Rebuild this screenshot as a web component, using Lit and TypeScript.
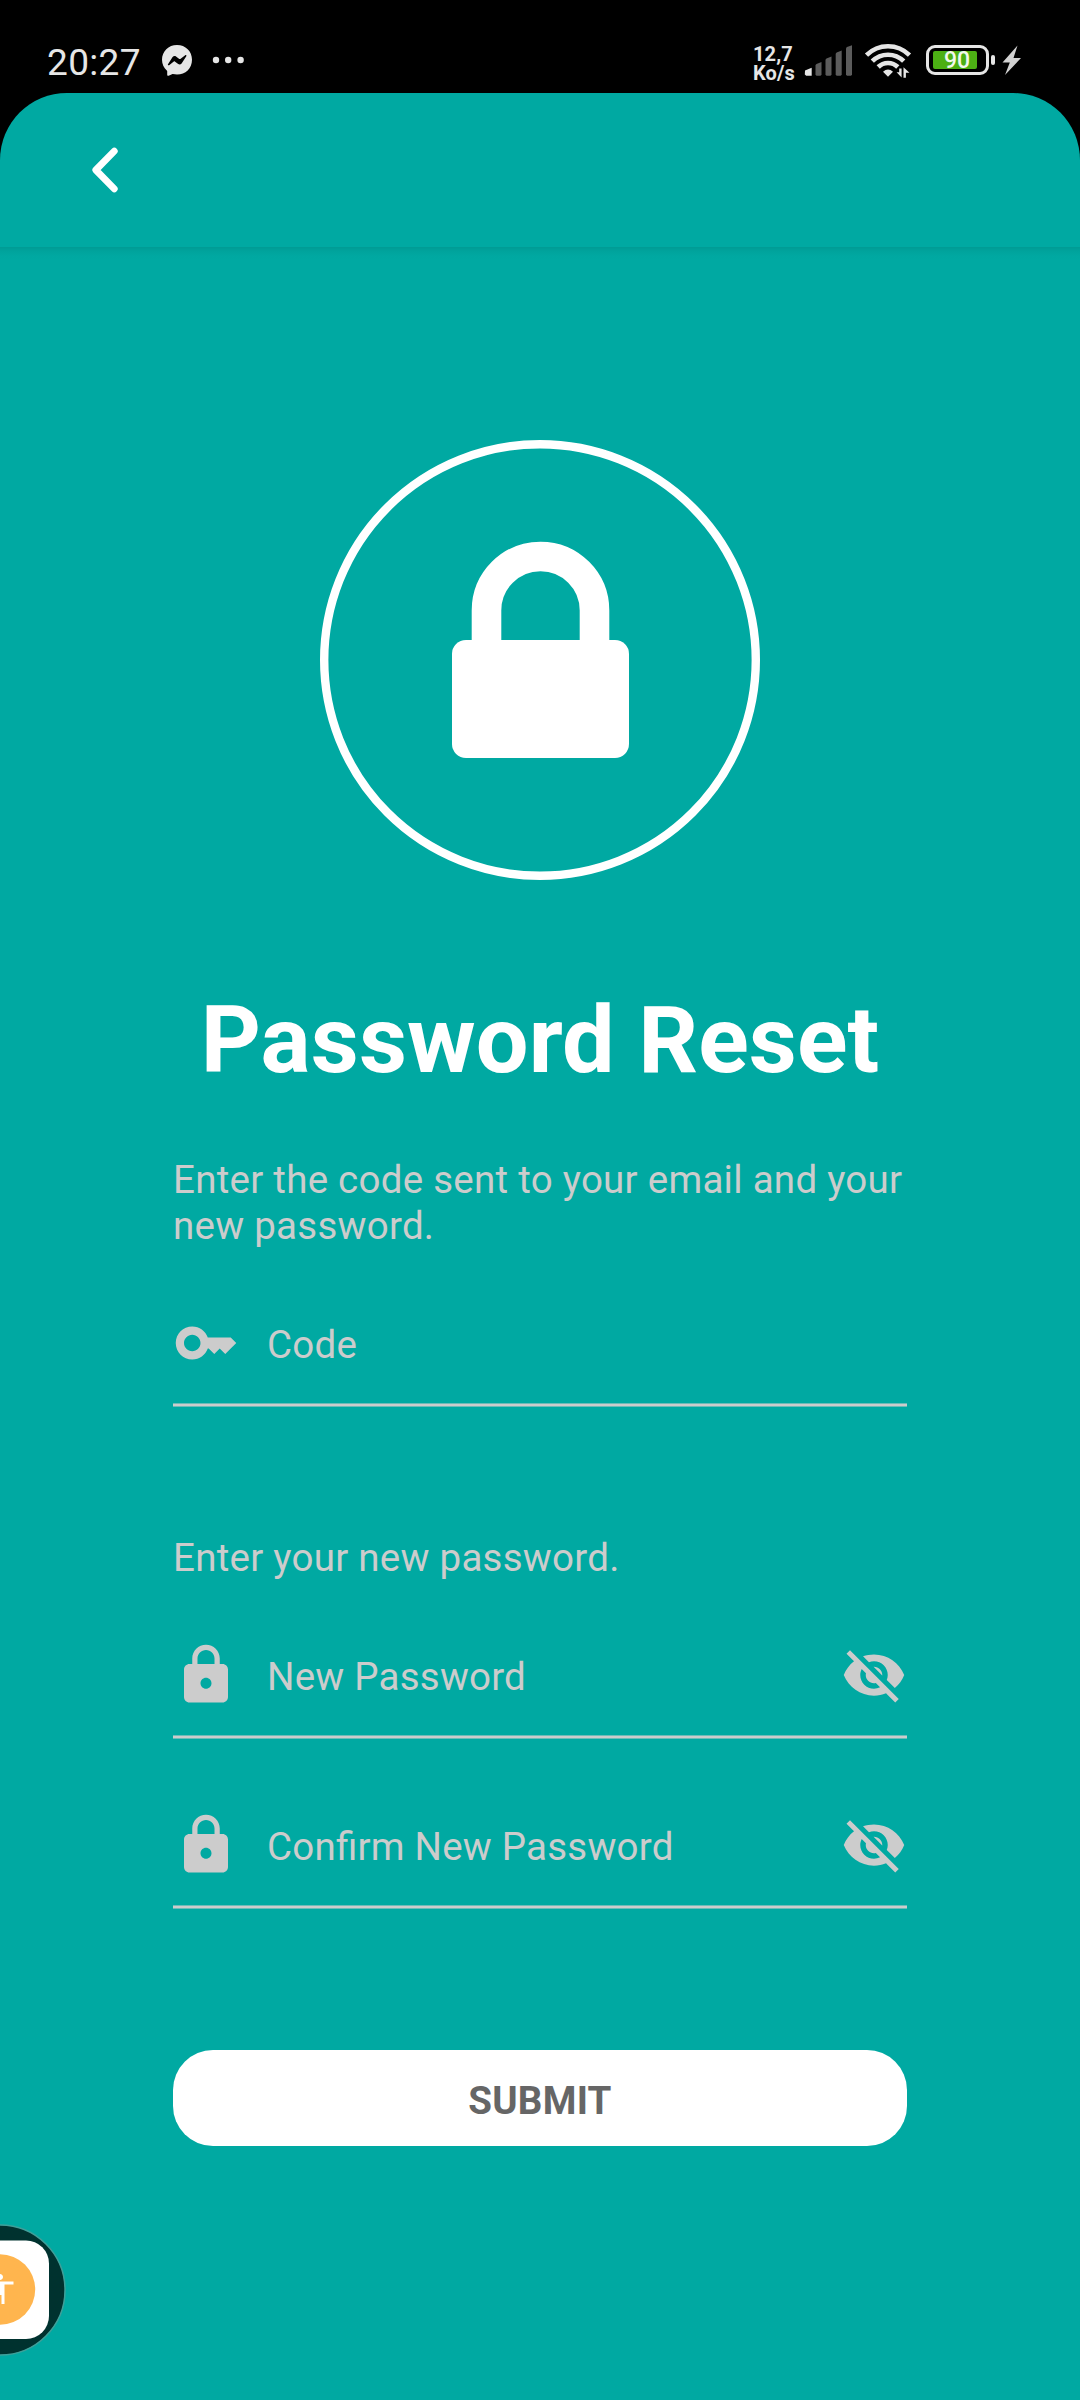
import { LitElement, html, css, svg } from "lit";
import { customElement, property } from "lit/decorators.js";

const ICONS = {
  key: svg`<path d="M21 10h-8.35C11.83 7.67 9.61 6 7 6c-3.31 0-6 2.69-6 6s2.69 6 6 6c2.61 0 4.83-1.67 5.65-4H13l2 2 2-2 2 2 4-4.04L21 10zM7 15c-1.65 0-3-1.35-3-3s1.35-3 3-3 3 1.35 3 3-1.35 3-3 3z"/>`,
  lock: svg`<path d="M18 8h-1V6c0-2.76-2.24-5-5-5S7 3.24 7 6v2H6c-1.1 0-2 .9-2 2v10c0 1.1.9 2 2 2h12c1.1 0 2-.9 2-2V10c0-1.1-.9-2-2-2zm-6 9c-1.1 0-2-.9-2-2s.9-2 2-2 2 .9 2 2-.9 2-2 2zm3.1-9H8.9V6c0-1.71 1.39-3.1 3.1-3.1 1.71 0 3.1 1.39 3.1 3.1v2z"/>`,
  eyeOff: svg`<path d="M12 7c2.76 0 5 2.24 5 5 0 .65-.13 1.26-.36 1.83l2.92 2.92c1.51-1.26 2.7-2.89 3.43-4.75-1.73-4.39-6-7.5-11-7.5-1.4 0-2.74.25-3.98.7l2.16 2.16C10.74 7.13 11.35 7 12 7zM2 4.27l2.28 2.28.46.46C3.08 8.3 1.78 10.02 1 12c1.73 4.39 6 7.5 11 7.5 1.55 0 3.03-.3 4.38-.84l.42.42L19.73 22 21 20.73 3.27 3 2 4.27zM7.53 9.8l1.55 1.55c-.05.21-.08.43-.08.65 0 1.66 1.34 3 3 3 .22 0 .44-.03.65-.08l1.55 1.55c-.67.33-1.41.53-2.2.53-2.76 0-5-2.24-5-5 0-.79.2-1.53.53-2.2zm4.31-.78l3.15 3.15.02-.16c0-1.66-1.34-3-3-3l-.17.01z"/>`,
};

@customElement("status-bar")
class StatusBar extends LitElement {
  static styles = css`
    :host {
      display: flex;
      align-items: flex-start;
      box-sizing: border-box;
      height: 93px;
      padding: 40px 58px 0 47px;
      color: #e6e6e6;
      background: #000;
    }
    svg {
      display: block;
      flex: none;
    }
    .time {
      padding-top: 1px;
      font-size: 37px;
      line-height: 44px;
      letter-spacing: 0.35px;
      width: 115px;
      white-space: nowrap;
    }
    .messenger {
      margin-top: 5px;
    }
    .dots {
      margin: 16px 0 0 20px;
    }
    .speed {
      margin: 5px 0 0 auto;
      width: 51px;
      font-size: 20px;
      line-height: 18.5px;
      font-weight: 700;
      letter-spacing: 0.1px;
      white-space: nowrap;
    }
    .signal {
      margin-top: 5px;
    }
    .wifi {
      margin: 2px 0 0 11px;
    }
    .battery {
      display: flex;
      align-items: center;
      margin: 5px 0 0 14px;
    }
    .shell {
      box-sizing: border-box;
      width: 63px;
      height: 30px;
      padding: 3px 4px;
      border: 3px solid #e6e6e6;
      border-radius: 9px;
    }
    .level {
      width: 44px;
      height: 18px;
      border-radius: 2px;
      background: #4caf14;
      color: #f2f8ee;
      font-size: 23px;
      font-weight: 500;
      line-height: 20px;
      text-indent: 11px;
      white-space: nowrap;
    }
    .nub {
      width: 4px;
      height: 10px;
      margin-left: 2px;
      border-radius: 2px;
      background: #e6e6e6;
    }
    .bolt {
      margin: 5px 0 0 7px;
    }
  `;

  render() {
    return html`
      <div class="time">20:27</div>
      <svg class="messenger" width="30" height="31" viewBox="0 0 30 31">
        <path fill="#e6e6e6" d="M15 0C6.500 0 0 6.300 0 14.800c0 4.300 1.800 8 4.800 10.600.3.200.4.600.4.900v3.500c0 .8.700 1.200 1.400.9l3.400-1.500c.3-.1.600-.1.900-.1 1.300.3 2.700.5 4.100.5 8.500 0 15-6.200 15-14.800S23.500 0 15 0z"/>
        <path fill="#000" d="M6 19.200l4.600-7.100c.8-1.200 2.300-1.500 3.400-.7l3.300 2.500c.3.200.7.200 1 0l4.900-3.700c.7-.5 1.500.3 1.100 1l-4.700 7.200c-.8 1.100-2.300 1.400-3.400.6l-3.400-2.500c-.3-.2-.7-.2-1 0l-4.700 3.700c-.7.500-1.600-.3-1.100-1z"/>
      </svg>
      <svg class="dots" width="34" height="8" viewBox="0 0 34 8" fill="#e6e6e6">
        <circle cx="4" cy="4" r="3.2"/><circle cx="16.200" cy="4" r="3.2"/><circle cx="28.600" cy="4" r="3.2"/>
      </svg>
      <div class="speed">12,7<br />Ko/s</div>
      <svg class="signal" width="49" height="31" viewBox="0 0 49 31" fill="#5c5c5c">
        <path fill="#e6e6e6" d="M1 25.500L7.700 22.700V30.700H2.200L.8 29.500z"/>
        <path d="M11.500 20.500q0-1 1-1.500l5-2V29.700l-1 1h-4l-1-1z"/>
        <path d="M21.500 15q0-1 1-1.500l5-2V29.700l-1 1h-4l-1-1z"/>
        <path d="M31.700 9q0-1 1-1.500l5-2V29.700l-1 1h-4l-1-1z"/>
        <path d="M42 3.500q0-1 1-1.500l5-1.700V29.700l-1 1h-4l-1-1z"/>
      </svg>
      <svg class="wifi" width="48" height="38" viewBox="0 0 48 38">
        <g fill="none" stroke="#e6e6e6" stroke-width="4.600">
          <path d="M2.500 13.200C14.500 1.300 33.500 1.300 45.500 13.200"/>
          <path d="M8.300 19.200C17 10.500 31 10.500 39.700 19.200"/>
          <path d="M14.200 25C19.600 19.600 28.400 19.600 33.800 25"/>
        </g>
        <path fill="#e6e6e6" d="M24 34.800l-5-5q5-4.600 10 0z"/>
        <path fill="#e6e6e6" d="M35.200 26.500h2.400v9l-5-5.200h2.600zM39.500 35.800h2.400v-5h3.600l-6-5.500z"/>
      </svg>
      <div class="battery">
        <div class="shell"><div class="level">90</div></div>
        <div class="nub"></div>
      </div>
      <svg class="bolt" width="20" height="31" viewBox="0 0 20 31">
        <path fill="#d2d2d2" d="M15.500.5L.5 17.500h7.300L3 30 19 13h-7.500z"/>
      </svg>
    `;
  }
}

@customElement("form-field")
class FormField extends LitElement {
  @property() label = "";
  @property() icon: "key" | "lock" = "lock";
  @property({ type: Boolean }) secret = false;

  static styles = css`
    :host {
      display: block;
      height: 97px;
    }
    .row {
      display: flex;
      height: 93px;
      color: #ccc;
    }
    .icon {
      display: block;
      flex: none;
      width: 66px;
      height: 66px;
      fill: #ccc;
    }
    .label {
      flex: 1;
      padding: 12px 0 0 28px;
      font-size: 38.5px;
      line-height: 46px;
      letter-spacing: 0.22px;
      font-feature-settings: "liga" 1;
      white-space: nowrap;
    }
    .rule {
      height: 4px;
      background: linear-gradient(#ccc8 1px, #ccc 1px 3px, #ccc8 3px);
    }
  `;

  render() {
    return html`
      <div class="row">
        <svg class="icon" viewBox="0 0 24 24">${ICONS[this.icon]}</svg>
        <span class="label">${this.label}</span>
        ${this.secret ? html`<svg class="icon" viewBox="0 0 24 24">${ICONS.eyeOff}</svg>` : null}
      </div>
      <div class="rule"></div>
    `;
  }
}

@customElement("app-root")
class AppRoot extends LitElement {
  static styles = css`
    :host {
      display: block;
      position: relative;
      width: 1080px;
      height: 2400px;
      overflow: hidden;
      background: #000;
      font-family: Roboto, "Liberation Sans", sans-serif;
    }
    .screen {
      height: 2307px;
      border-radius: 67px 67px 0 0;
      background: #00a9a2;
      overflow: hidden;
    }
    .header {
      display: flex;
      box-sizing: border-box;
      height: 154px;
      padding: 51px 0 0 85px;
    }
    .content {
      display: flex;
      flex-direction: column;
      box-sizing: border-box;
      height: 2153px;
      padding: 193px 173px 0;
      background: linear-gradient(#009b94, #00a39c 4px, #00a8a1 9px, #00a9a2 13px);
    }
    .badge {
      display: block;
      align-self: center;
      flex: none;
    }
    .title {
      margin: 105px 0 0;
      color: #fff;
      font-size: 93.5px;
      line-height: 110px;
      font-weight: 700;
      letter-spacing: 0.1px;
      text-align: center;
      white-space: nowrap;
    }
    .hint {
      margin: 62px 0 61px;
      color: #ccc;
      font-size: 38.5px;
      line-height: 46px;
      letter-spacing: 0.26px;
    }
    .hint.second {
      margin: 128px 0 61px;
    }
    .confirm {
      margin-top: 73px;
    }
    .submit {
      height: 96px;
      margin-top: 141px;
      padding: 6px 0 0;
      border: 0;
      border-radius: 40px;
      background: #fff;
      color: #666;
      font: 700 38.5px/46px Roboto, "Liberation Sans", sans-serif;
      letter-spacing: 0.25px;
    }
    .bubble {
      position: absolute;
      left: -66px;
      top: 2224px;
    }
  `;

  render() {
    return html`
      <status-bar></status-bar>
      <div class="screen">
        <div class="header">
          <svg width="40" height="52" viewBox="0 0 40 52">
            <path d="M29.300 7.200L10.800 26l18.500 18.800" fill="none" stroke="#fff" stroke-width="6.800" stroke-linecap="round" stroke-linejoin="round"/>
          </svg>
        </div>
        <div class="content">
          <svg class="badge" width="440" height="440" viewBox="0 0 440 440">
            <circle cx="220" cy="220" r="215.800" fill="none" stroke="#fff" stroke-width="8.400"/>
            <path d="M166.500 210v-39.500a54 54 0 0 1 108 0v39.500" fill="none" stroke="#fff" stroke-width="29.600"/>
            <rect x="132" y="200" width="177" height="118" rx="14" fill="#fff"/>
          </svg>
          <h1 class="title">Password Reset</h1>
          <p class="hint">Enter the code sent to your email and your new password.</p>
          <form-field icon="key" label="Code"></form-field>
          <p class="hint second">Enter your new password.</p>
          <form-field icon="lock" label="New Password" secret></form-field>
          <form-field class="confirm" icon="lock" label="Confirm New Password" secret></form-field>
          <button class="submit">SUBMIT</button>
        </div>
      </div>
      <svg class="bubble" width="132" height="132" viewBox="-66 -66 132 132">
        <circle r="65" fill="#00322f" stroke="#3f9f99" stroke-width="1.500"/>
        <rect x="-49" y="-49.500" width="98" height="98.500" rx="23" fill="#fff"/>
        <circle r="35.200" cy="-.5" fill="#ffb54e"/>
        <path fill="#fff" transform="translate(-18 -19) scale(1.500)" d="M12 2c1.100 0 2 .9 2 2s-.9 2-2 2-2-.9-2-2 .9-2 2-2zm9 7h-6v13h-2v-6h-2v6H9V9H3V7h18v2z"/>
      </svg>
    `;
  }
}
